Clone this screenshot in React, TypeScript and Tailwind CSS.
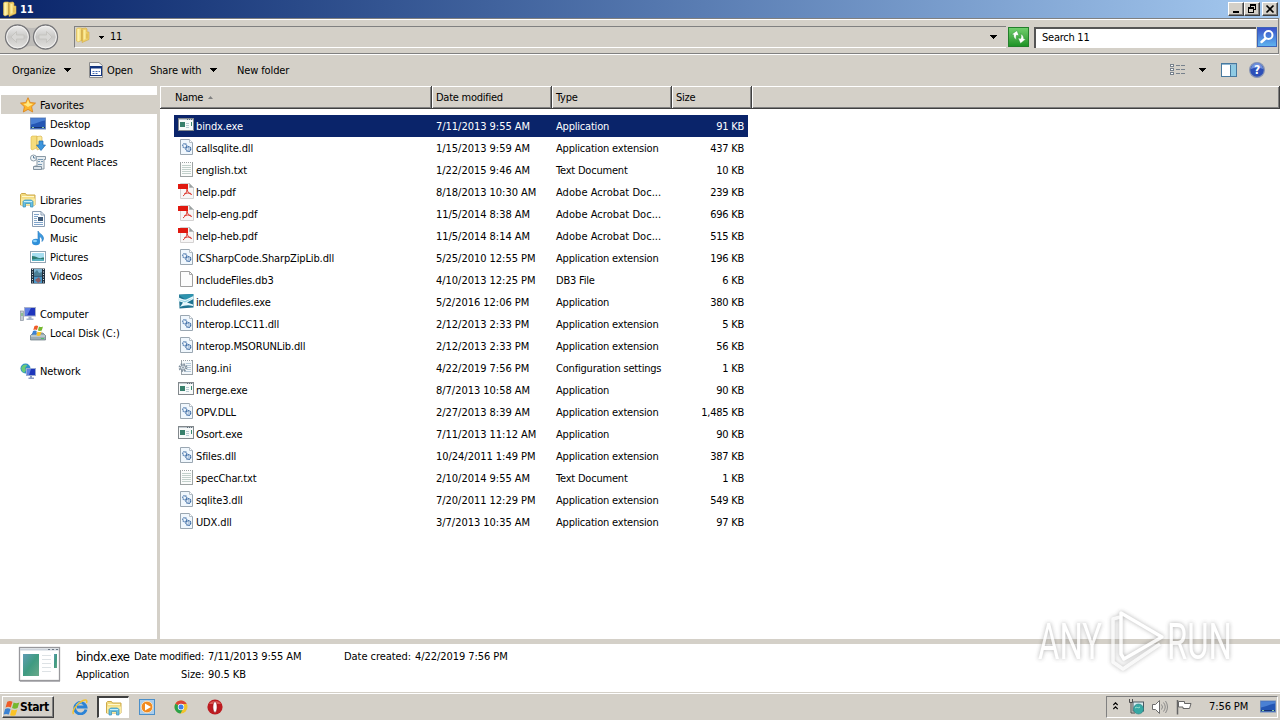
import type { ReactNode } from 'react'

type IconKind = 'exe' | 'dll' | 'txt' | 'pdf' | 'blank' | 'setup' | 'ini'

interface FileRow {
  name: string
  date: string
  type: string
  size: string
  icon: IconKind
}

const FILES: FileRow[] = [
  { name: 'bindx.exe', date: '7/11/2013 9:55 AM', type: 'Application', size: '91 KB', icon: 'exe' },
  { name: 'callsqlite.dll', date: '1/15/2013 9:59 AM', type: 'Application extension', size: '437 KB', icon: 'dll' },
  { name: 'english.txt', date: '1/22/2015 9:46 AM', type: 'Text Document', size: '10 KB', icon: 'txt' },
  { name: 'help.pdf', date: '8/18/2013 10:30 AM', type: 'Adobe Acrobat Doc...', size: '239 KB', icon: 'pdf' },
  { name: 'help-eng.pdf', date: '11/5/2014 8:38 AM', type: 'Adobe Acrobat Doc...', size: '696 KB', icon: 'pdf' },
  { name: 'help-heb.pdf', date: '11/5/2014 8:14 AM', type: 'Adobe Acrobat Doc...', size: '515 KB', icon: 'pdf' },
  { name: 'ICSharpCode.SharpZipLib.dll', date: '5/25/2010 12:55 PM', type: 'Application extension', size: '196 KB', icon: 'dll' },
  { name: 'IncludeFiles.db3', date: '4/10/2013 12:25 PM', type: 'DB3 File', size: '6 KB', icon: 'blank' },
  { name: 'includefiles.exe', date: '5/2/2016 12:06 PM', type: 'Application', size: '380 KB', icon: 'setup' },
  { name: 'Interop.LCC11.dll', date: '2/12/2013 2:33 PM', type: 'Application extension', size: '5 KB', icon: 'dll' },
  { name: 'Interop.MSORUNLib.dll', date: '2/12/2013 2:33 PM', type: 'Application extension', size: '56 KB', icon: 'dll' },
  { name: 'lang.ini', date: '4/22/2019 7:56 PM', type: 'Configuration settings', size: '1 KB', icon: 'ini' },
  { name: 'merge.exe', date: '8/7/2013 10:58 AM', type: 'Application', size: '90 KB', icon: 'exe' },
  { name: 'OPV.DLL', date: '2/27/2013 8:39 AM', type: 'Application extension', size: '1,485 KB', icon: 'dll' },
  { name: 'Osort.exe', date: '7/11/2013 11:12 AM', type: 'Application', size: '90 KB', icon: 'exe' },
  { name: 'Sfiles.dll', date: '10/24/2011 1:49 PM', type: 'Application extension', size: '387 KB', icon: 'dll' },
  { name: 'specChar.txt', date: '2/10/2014 9:55 AM', type: 'Text Document', size: '1 KB', icon: 'txt' },
  { name: 'sqlite3.dll', date: '7/20/2011 12:29 PM', type: 'Application extension', size: '549 KB', icon: 'dll' },
  { name: 'UDX.dll', date: '3/7/2013 10:35 AM', type: 'Application extension', size: '97 KB', icon: 'dll' },
]

function Svg({ children, className = 'h-4 w-4', box = '0 0 16 16' }: { children: ReactNode; className?: string; box?: string }) {
  return (
    <svg viewBox={box} className={`block shrink-0 ${className}`} fill="none">
      {children}
    </svg>
  )
}

function FileIcon({ kind }: { kind: IconKind }) {
  switch (kind) {
    case 'exe':
      return (
        <Svg>
          <rect x="0.5" y="1.5" width="15" height="12" fill="#f8fafa" stroke="#82888c" />
          <path d="M1 2.5h14" stroke="#c3ccd2" />
          <path d="M9 2.5h1M11 2.5h1M13 2.5h1" stroke="#5f6d78" />
          <rect x="2" y="5" width="5" height="5" fill="#38806c" />
          <path d="M8 6.5h3M8 8.5h3M8 10.5h3" stroke="#b7cbd2" />
          <path d="M13.5 5v4" stroke="#3c8a70" />
        </Svg>
      )
    case 'dll':
      return (
        <Svg>
          <path d="M2.5 .5h9l3 3v12h-12z" fill="#f0f7fd" stroke="#9aa7b2" />
          <path d="M11.5 .5v3h3" fill="#fff" stroke="#b5bec6" />
          <circle cx="6.7" cy="6.7" r="2" stroke="#5b84b5" strokeWidth="1.5" strokeDasharray="1.3 .5" />
          <circle cx="10.3" cy="10" r="2.3" stroke="#3f6da5" strokeWidth="1.5" strokeDasharray="1.4 .5" />
          <circle cx="10.3" cy="10" r=".8" fill="#8fb0d4" />
        </Svg>
      )
    case 'txt':
      return (
        <Svg>
          <rect x="2.5" y="1.5" width="12" height="14" fill="#fbfcfb" stroke="#9da3a3" />
          <path d="M3 1.5h11" stroke="#fff" strokeDasharray="1 1" />
          <path d="M4 4.5h9M4 6.5h9M4 8.5h9M4 10.5h9M4 12.5h9" stroke="#c2d0cb" />
        </Svg>
      )
    case 'pdf':
      return (
        <Svg>
          <path d="M2.5 .5h9l4 4v11h-13z" fill="#f7f6f6" stroke="#d4d2d2" />
          <path d="M11.5 .5v4h4z" fill="#9aa0a0" stroke="#b9bdbd" />
          <rect x="0" y="1" width="10" height="5" fill="#e0190f" />
          <path d="M9 6c.3 3-2 5.5-4 7M9 6c.5 3 2 5 5 5.500M6 11c2-1 5-1.300 7-.5" stroke="#dd3a30" />
        </Svg>
      )
    case 'blank':
      return (
        <Svg>
          <path d="M2.5 .5h9l3 3v12h-12z" fill="#fcfcfc" stroke="#a0a0a0" />
          <path d="M11.5 .5v3h3" stroke="#a9a9a9" />
        </Svg>
      )
    case 'setup':
      return (
        <Svg>
          <path d="M1 1.500l14.500-.5v13.500l-14 1z" fill="#1f7391" />
          <path d="M1 2l14-1v3L8 7z" fill="#2d93ae" />
          <path d="M0 4.500c3 .5 5 2.500 8 2l7.500-3.500v3L9 9.500l6 2v1.500C10 11.500 6 12.500 2 14l3-4.500-5-1.500z" fill="#e6f7fc" />
          <path d="M0 6.500l7 1.500 8-3-6 3.500-2 1z" fill="#93d3e2" />
        </Svg>
      )
    case 'ini':
      return (
        <Svg>
          <rect x="3.5" y="1.5" width="11" height="14" fill="#f4f8fb" stroke="#9aa2a8" />
          <path d="M4 1.5h10" stroke="#fff" strokeDasharray="1 1" />
          <path d="M8 4.5h5M9 6.5h4M9 8.5h4M9 10.5h4M7 12.5h6" stroke="#b5c8d8" />
          <circle cx="5" cy="8.5" r="3.4" stroke="#7e8e9c" strokeWidth="2" strokeDasharray="1.6 1.07" />
          <circle cx="5" cy="8.5" r="2.5" fill="#dfe7ee" stroke="#8594a2" />
          <circle cx="5" cy="8.5" r="1" fill="#8d9ba8" />
        </Svg>
      )
  }
}

function Folder({ className = 'h-4 w-4' }: { className?: string }) {
  return (
    <Svg className={className}>
      <path d="M1.500 2l1-1h4v12.500L3 15l-1.500-1z" fill="#f5dc7c" stroke="#dcb84c" strokeWidth=".6" />
      <path d="M2.500 2h2v12l-2 .5z" fill="#fdf1ad" />
      <path d="M7 1.500l4-.5 1 1v3h2v7.500l-7 3z" fill="#efd06a" stroke="#d3aa40" strokeWidth=".6" />
      <path d="M8.500 3h2v9l-2 1z" fill="#fbeb9c" />
      <path d="M12 6.500v5M7 3v11" stroke="#c9a03b" strokeWidth=".7" />
    </Svg>
  )
}

function Libraries({ className = 'h-4 w-4' }: { className?: string }) {
  return (
    <Svg className={className}>
      <path d="M.5 13V2.500l1-1h4l1 1.500h8.500v10z" fill="#f3dc82" stroke="#cda94a" />
      <path d="M2 4.500h12" stroke="#fff8cf" />
      <path d="M1 6.500h14V13H1z" fill="#faeb9f" />
      <path d="M3 15V9.500l1.500-1.500h7L13 9.500V15h-2.500v-3.500h-5V15z" fill="#68bfe2" stroke="#388fb8" strokeWidth=".7" />
      <path d="M4 9.500h8" stroke="#c9effb" />
    </Svg>
  )
}

function Monitor({ className = 'h-4 w-4' }: { className?: string }) {
  return (
    <Svg className={className}>
      <rect x=".5" y="2" width="15" height="11" fill="#2456b4" stroke="#6d8bbb" />
      <path d="M1 2.500h14v2C10 5 6 8 1 8.500z" fill="#4a80d4" />
      <path d="M1 11.500h14" stroke="#16306f" />
      <path d="M2 11.500h2M12 11.500h2" stroke="#8ed0a0" />
    </Svg>
  )
}

// Four-colour waving flag, drawn in the top of a 16px box
function Flag() {
  return (
    <>
      <path d="M4.500 1c1.500-1 2.500-.6 3.700 0L7 5c-1.300-.7-2.500-.7-3.700 0z" fill="#ef5c28" />
      <path d="M9 1.400c1.200.7 2.500.8 4 0l-1.200 4c-1.400.7-2.600.6-3.900 0z" fill="#75b82f" />
      <path d="M3 6c1.500-.8 2.500-.6 3.800 0l-1.200 4c-1.300-.7-2.500-.6-3.700 0z" fill="#3b82d2" />
      <path d="M7.600 6.400c1.300.7 2.500.7 4 0l-1.300 4c-1.400.7-2.600.6-3.800 0z" fill="#fbc324" />
    </>
  )
}

const NAV_ICONS: Record<string, ReactNode> = {
  Favorites: (
    <Svg>
      <path d="M8 .7l2.200 4.800 5.300.6-3.900 3.600 1.100 5.300L8 12.400 3.300 15l1.100-5.300L.5 6.100l5.300-.6z" fill="#fdb52c" stroke="#d98018" strokeWidth=".8" />
      <path d="M8 2.500l1.500 4 3.500.5L8 10l-4.500-3 3-.5z" fill="#ffe884" />
    </Svg>
  ),
  Desktop: <Monitor />,
  Downloads: (
    <Svg>
      <path d="M1 2l1-1h5v12l-5 2-1-1z" fill="#f5dc7c" stroke="#dcb84c" strokeWidth=".6" />
      <path d="M7 1.500l4-.5 1 1v11l-5 2z" fill="#fbeb9c" stroke="#d3aa40" strokeWidth=".6" />
      <path d="M9 6h4v4h2.500L11 15.500 6.500 10H9z" fill="#3c95dd" stroke="#1c68ad" strokeWidth=".7" />
    </Svg>
  ),
  'Recent Places': (
    <Svg>
      <path d="M5 2.500h10.500v3H14v9.500H4.500V12H7V6z" fill="#e6ecf0" stroke="#8a99a5" />
      <path d="M3.500 12.500h8v3h-8z" fill="#dce4ea" stroke="#82929f" />
      <path d="M8 5.500h5M8 7.500h2M11 7.500h2M8 10.500h4" stroke="#789ab5" />
      <circle cx="3.500" cy="4" r="3" fill="#f3f7f9" stroke="#8c9da9" />
      <path d="M3.500 2v2H5.500" stroke="#5f7f9a" />
    </Svg>
  ),
  Libraries: <Libraries />,
  Documents: (
    <Svg>
      <path d="M2.500 .5h8.500l3.500 3.500v11.500h-12z" fill="#fafcfe" stroke="#8a9db3" />
      <path d="M11 .5V4h3.500" stroke="#8a9db3" />
      <path d="M4 3.500h5M4 5.500h4M4 11.500h9M4 13.500h9" stroke="#7fa3ca" />
      <rect x="8" y="6" width="5" height="4" fill="#3e5875" />
      <path d="M4 7.500h3M4 9.500h3" stroke="#8cabc9" />
    </Svg>
  ),
  Music: (
    <Svg>
      <path d="M8 1c1 3 5 3 5.500 7 0 1.500-.5 2.500-1.500 3.500.5-3-1-4.500-2.500-5V12H8z" fill="#3e9be0" stroke="#2377bd" strokeWidth=".6" />
      <ellipse cx="6" cy="12" rx="4" ry="3.200" fill="#2e8fd9" />
      <ellipse cx="5" cy="11" rx="2" ry="1.200" fill="#8bd2fa" />
    </Svg>
  ),
  Pictures: (
    <Svg>
      <rect x=".5" y="2.500" width="15" height="11" fill="#fff" stroke="#93a6b5" />
      <rect x="2" y="4" width="12" height="8" fill="#a7def0" />
      <path d="M2 7c3 0 5 1.500 7 2s3-.5 5-.5V12H2z" fill="#2d7c71" />
      <path d="M2 10.500c5-1 8-1 12 0V12H2z" fill="#5ab2c2" />
    </Svg>
  ),
  Videos: (
    <Svg>
      <rect x="1" y=".5" width="14" height="15" fill="#20303f" />
      <rect x="4" y="1" width="8" height="6.500" fill="#7fb4d2" />
      <rect x="4" y="8.500" width="8" height="6.500" fill="#4a98c9" />
      <path d="M4 5l3-3 2 3 3-1v3.500H4z" fill="#4b7f96" />
      <path d="M5 12l4-3 2 4-3 2z" fill="#8d5f66" />
      <path d="M2.500 1v14M13.500 1v14" stroke="#dce6ec" strokeDasharray="1 1.500" />
    </Svg>
  ),
  Computer: (
    <Svg>
      <rect x="0.500" y="5" width="3" height="9.500" fill="#c3cbd3" stroke="#8b959f" strokeWidth=".7" />
      <path d="M2 7v3" stroke="#56b454" />
      <rect x="4.500" y="1.500" width="11" height="8.500" fill="#1e35bd" stroke="#a8b1ca" />
      <path d="M5 2h6l-4 7.500H5z" fill="#5d7ce4" />
      <path d="M8.500 10.500h3v2h2v1.500h-7v-1.500h2z" fill="#a5b3cb" />
    </Svg>
  ),
  'Local Disk (C:)': (
    <Svg>
      <path d="M3 8h10l2.500 2.500v4.500H.5v-4.500z" fill="#9cabb2" stroke="#66777f" strokeWidth=".7" />
      <path d="M1 11h14" stroke="#d5e3e8" />
      <path d="M11 13.500h3" stroke="#4ec26c" />
      <Flag />
    </Svg>
  ),
  Network: (
    <Svg>
      <circle cx="5.500" cy="5.500" r="5" fill="#2e8ecb" />
      <path d="M1.500 4c2-3 4-3 6-2L5 5l1 2-2 3C2 8.500.8 7 1.500 4z" fill="#6bcb76" />
      <rect x="6.500" y="5.500" width="9" height="7" fill="#1d36bb" stroke="#9aa9d0" />
      <path d="M7 6h4l-2 6H7z" fill="#5f80e2" />
      <path d="M10 13h2v1.500h2V16H8.500v-1.500H10z" fill="#8b9cc4" />
    </Svg>
  ),
}

const NAV_GROUPS = [
  { root: 'Favorites', items: ['Desktop', 'Downloads', 'Recent Places'] },
  { root: 'Libraries', items: ['Documents', 'Music', 'Pictures', 'Videos'] },
  { root: 'Computer', items: ['Local Disk (C:)'] },
  { root: 'Network', items: [] },
]

function Caret({ className = '' }: { className?: string }) {
  return (
    <svg viewBox="0 0 7 4" className={`h-1 w-[7px] shrink-0 ${className}`} shapeRendering="crispEdges">
      <path d="M0 0h7v1H6v1H5v1H4v1H3V3H2V2H1V1H0z" fill="#000" />
    </svg>
  )
}

function CaptionButton({ children, className = '' }: { children: ReactNode; className?: string }) {
  return (
    <button
      type="button"
      className={`flex h-[14px] w-4 items-center justify-center border border-t-white border-r-[#404040] border-b-[#404040] border-l-white bg-[#d4d0c8] shadow-[inset_-1px_-1px_0_#808080] ${className}`}
    >
      {children}
    </button>
  )
}

function TitleBar() {
  return (
    <header className="flex h-[18px] items-center bg-linear-to-r from-[#0a246a] to-[#a6caf0] pr-[2px] pl-[2px]">
      <Folder />
      <span className="ml-[2px] pt-[2px] text-[11px] font-bold text-white">11</span>
      <CaptionButton className="ml-auto">
        <svg viewBox="0 0 12 10" className="h-[10px] w-3" shapeRendering="crispEdges">
          <path d="M3 7h6v2H3z" fill="#000" />
        </svg>
      </CaptionButton>
      <CaptionButton>
        <svg viewBox="0 0 12 10" className="h-[10px] w-3" fill="none" stroke="#000" shapeRendering="crispEdges">
          <path d="M4.500 3V.5h5v5H8M4 1.500h6M2.500 3.500h5v5h-5zM2 4.500h6" />
        </svg>
      </CaptionButton>
      <CaptionButton className="ml-[2px]">
        <svg viewBox="0 0 12 10" className="h-[10px] w-3">
          <path d="M2.500 1.500l7 7M9.500 1.500l-7 7" stroke="#000" strokeWidth="1.700" />
        </svg>
      </CaptionButton>
    </header>
  )
}

function NavArrows() {
  return (
    <svg viewBox="0 0 56 28" className="h-7 w-14 shrink-0" fill="none">
      <defs>
        <linearGradient id="orb" x1="0" y1="0" x2="0" y2="1">
          <stop offset="0" stopColor="#efefee" />
          <stop offset=".5" stopColor="#c8c7c5" />
          <stop offset="1" stopColor="#e4e3e1" />
        </linearGradient>
      </defs>
      <path d="M14 2.500h28v23H14z" fill="#bebcb9" />
      <path d="M16 2c7 4 17 4 24 0zM16 26c7-4 17-4 24 0z" fill="#d4d0c8" />
      <circle cx="13.500" cy="14" r="12" fill="url(#orb)" stroke="#77777a" strokeWidth="1.300" />
      <circle cx="41.500" cy="14" r="12" fill="url(#orb)" stroke="#77777a" strokeWidth="1.300" />
      <circle cx="13.500" cy="14" r="10.800" stroke="#f4f3f2" />
      <circle cx="41.500" cy="14" r="10.800" stroke="#f4f3f2" />
      <path d="M7 14l5.500-5.500v3.500H20v4h-7.500v3.500zM48 14l-5.500-5.500v3.500H35v4h7.500v3.500z" fill="#d8d7d5" stroke="#c0beba" strokeWidth=".7" />
    </svg>
  )
}

function AddressBar() {
  return (
    <div className="mr-[1px] flex h-9 items-center border-y border-t-[#808080] border-r border-r-[#808080] border-b-[#808080] pt-[2px] pl-1 shadow-[inset_0_1px_0_#fff,0_1px_0_#fff]">
      <NavArrows />
      <div className="ml-[14px] flex h-[22px] w-[932px] items-center border-t border-b border-l border-t-[#808080] border-b-white border-l-[#808080]">
        <Folder className="mb-1 h-4 w-4" />
        <svg viewBox="0 0 5 3" className="ml-[8px] h-[3px] w-[5px]" shapeRendering="crispEdges">
          <path d="M0 0h5v1H4v1H3v1H2V2H1V1H0z" fill="#000" />
        </svg>
        <span className="ml-[6px]">11</span>
        <Caret className="mr-[9px] ml-auto" />
      </div>
      <button type="button" className="ml-[2px] flex h-5 w-[21px] items-center justify-center border border-[#237f2b] bg-linear-to-b from-[#6fce6c] to-[#1b9425]">
        <svg viewBox="0 0 17 16" className="h-4 w-[17px]">
          <path d="M7 1.500L1.500 5.500l2 .3c0 2 .5 3.500 3 5.200C6 9 6 7.500 6.500 6.300l2.500.4zM10.500 14.500L16 10l-2.200-.2c0-2.300-.8-3.800-3.300-5.300.7 2 .8 3.500.2 4.900L8 9z" fill="#fff" stroke="#2a9633" strokeWidth=".5" />
        </svg>
      </button>
      <div className="ml-[5px] flex h-[21px] w-[222px] items-center border-t-2 border-l-2 border-t-[#555] border-l-[#555] bg-white pl-[6px]">
        <span>Search 11</span>
      </div>
      <button type="button" className="ml-px flex h-5 w-5 items-center justify-center border border-[#3d63b8] bg-linear-to-b from-[#3c50c8] to-[#5fb2ee]">
        <svg viewBox="0 0 18 18" className="h-[18px] w-[18px]" fill="none">
          <circle cx="10.500" cy="7" r="4" stroke="#fff" strokeWidth="2" />
          <path d="M7.500 10.500L3.500 14" stroke="#fff" strokeWidth="2.500" strokeLinecap="round" />
        </svg>
      </button>
    </div>
  )
}

function CommandBar() {
  return (
    <div className="flex h-[31px] items-center pl-3 tracking-[-0.12px] [&_span]:pt-[2px]">
      <span className="w-[52px]">Organize</span>
      <Caret />
      <Svg className="ml-[17px] h-4 w-4">
        <path d="M1.500 .5h9.500l3.500 3v12H1.500z" fill="#f5f6f6" stroke="#8b8b8b" />
        <rect x="2.500" y="4.500" width="11" height="9" fill="#fff" stroke="#13347e" />
        <path d="M2 5.500h12" stroke="#13347e" strokeWidth="2" />
        <path d="M4.500 9.500h2M7.500 9.500h2M10.500 9.500h1.500M4.500 11.500h2M7.500 11.500h2" stroke="#476eb6" />
      </Svg>
      <span className="ml-[3px] w-[43px]">Open</span>
      <span className="w-[60px]">Share with</span>
      <Caret />
      <span className="ml-[20px]">New folder</span>
      <svg viewBox="0 0 16 14" className="ml-auto h-[14px] w-4" fill="none" shapeRendering="crispEdges">
        <path d="M.5 1.500h3v2h-3zM.5 5.500h3v2h-3zM.5 9.500h3v2h-3z" fill="#fff" stroke="#77818c" />
        <path d="M6 2.500h4M11 2.500h4M6 6.500h4M11 6.500h4M6 10.500h4M11 10.500h4" stroke="#77818c" />
      </svg>
      <Caret className="ml-[13px]" />
      <svg viewBox="0 0 16 14" className="ml-[15px] h-[14px] w-4" fill="none" shapeRendering="crispEdges">
        <rect x=".5" y=".5" width="15" height="13" fill="#fff" stroke="#47799f" />
        <path d="M1 1.500h14" stroke="#8fb7d2" />
        <rect x="10" y="2" width="5" height="11" fill="#8fcbe4" />
        <path d="M9.500 2v11" stroke="#47799f" />
      </svg>
      <svg viewBox="0 0 16 16" className="mr-[15px] ml-3 h-4 w-4">
        <circle cx="8" cy="8" r="7.400" fill="#2c4fb8" stroke="#8a97b5" strokeWidth="1.200" />
        <path d="M2 7a6 6 0 0 1 12 0c-4-2-8-2-12 0z" fill="#6f90dc" />
        <text x="8" y="12.200" textAnchor="middle" fontSize="12" fontWeight="bold" fill="#fff">?</text>
      </svg>
    </div>
  )
}

function NavItem({ name, root = false }: { name: string; root?: boolean }) {
  return (
    <div className={`flex h-[19px] items-center gap-1 ${root ? 'pl-[19px]' : 'pl-[29px]'} ${name === 'Favorites' ? 'bg-[#d4d0c8]' : ''}`}>
      {NAV_ICONS[name]}
      <span className="pt-[2px]">{name}</span>
    </div>
  )
}

function Sidebar() {
  return (
    <nav className="flex w-[160px] flex-col gap-[19px] border-r-[3px] border-[#d4d0c8] bg-white pt-[9px] pl-px tracking-[-0.1px]">
      {NAV_GROUPS.map((g) => (
        <div key={g.root}>
          <NavItem name={g.root} root />
          {g.items.map((i) => (
            <NavItem key={i} name={i} />
          ))}
        </div>
      ))}
    </nav>
  )
}

function HeaderCell({ className, children }: { className: string; children?: ReactNode }) {
  return (
    <div className={`flex items-center border-r border-r-[#404040] border-b border-b-[#404040] bg-[#d4d0c8] pt-[2px] shadow-[inset_1px_1px_0_#fff,inset_-1px_-1px_0_#808080] ${className}`}>
      {children}
    </div>
  )
}

function FileList() {
  return (
    <main className="flex-1 bg-white">
      <div className="flex h-[23px]">
        <HeaderCell className="w-[272px] pl-[15px]">
          Name
          <svg viewBox="0 0 5 3" className="mb-[2px] ml-[5px] h-[3px] w-[5px]">
            <path d="M2.500 0L5 3H0z" fill="#808080" />
          </svg>
        </HeaderCell>
        <HeaderCell className="w-[120px] pl-1">Date modified</HeaderCell>
        <HeaderCell className="w-[120px] pl-1">Type</HeaderCell>
        <HeaderCell className="w-[80px] pl-1">Size</HeaderCell>
        <HeaderCell className="flex-1" />
      </div>
      <div className="mt-[6px] ml-[14px] w-[574px] [&_span]:pt-[2px] [&_svg]:mb-[2px]">
        {FILES.map((f, i) => (
          <div key={f.name} className={`flex h-[22px] items-center pr-1 pl-1 ${i === 0 ? 'bg-[#0a246a] text-white' : ''}`}>
            <FileIcon kind={f.icon} />
            <span className="ml-[2px] w-[240px] tracking-[-0.13px]">{f.name}</span>
            <span className="w-[120px] tracking-[-0.03px]">{f.date}</span>
            <span className={`w-[120px] ${f.icon === 'pdf' ? 'tracking-[0.05px]' : 'tracking-[-0.2px]'}`}>{f.type}</span>
            <span className="ml-auto">{f.size}</span>
          </div>
        ))}
      </div>
    </main>
  )
}

function DetailsPane() {
  return (
    <section className="flex h-12 bg-white pt-[2px] pl-[18px] tracking-[-0.06px]">
      <svg viewBox="0 0 44 37" className="h-[37px] w-11 shrink-0" fill="none">
        <defs>
          <linearGradient id="thumb" x1="0" y1="0" x2="1" y2="1">
            <stop offset="0" stopColor="#5f9cb4" />
            <stop offset=".5" stopColor="#3f9b81" />
            <stop offset="1" stopColor="#6aa98a" />
          </linearGradient>
        </defs>
        <rect x="1.500" y="1.500" width="40" height="33" fill="#fff" stroke="#98989c" strokeWidth="1.300" />
        <path d="M2 35.500h40" stroke="#b4b4b8" />
        <path d="M2 3.500h39" stroke="#ccd3dc" strokeWidth="2" />
        <path d="M30 3.500h2M34 3.500h2M38 3.500h2" stroke="#6c7784" />
        <rect x="5" y="8" width="16" height="22" fill="url(#thumb)" />
        <path d="M24 9.500h9M24 13.500h9M24 17.500h9M24 21.500h9M24 25.500h9" stroke="#dde2e5" />
        <rect x="36" y="8" width="3" height="14" fill="url(#thumb)" />
      </svg>
      <div className="ml-[14px] flex flex-col pt-[2px]">
        <div className="flex h-[18px] items-center">
          <span className="w-[58px] text-[13px] tracking-[-0.35px]">bindx.exe</span>
          <span className="w-[74px] tracking-[-0.25px]">Date modified:</span>
          <span className="w-[136px]">7/11/2013 9:55 AM</span>
          <span className="w-[71px]">Date created:</span>
          <span>4/22/2019 7:56 PM</span>
        </div>
        <div className="flex h-[18px] items-center">
          <span className="w-[105px] tracking-[-0.2px]">Application</span>
          <span className="w-[27px]">Size:</span>
          <span>90.5 KB</span>
        </div>
      </div>
    </section>
  )
}

function Taskbar() {
  return (
    <footer className="flex h-7 items-center border-t border-[#d4d0c8] bg-[#d4d0c8] pt-px pl-[2px] shadow-[inset_0_1px_0_#fff]">
      <button type="button" className="flex h-[22px] w-[52px] items-center border border-t-white border-r-[#404040] border-b-[#404040] border-l-white text-[12px] font-bold shadow-[inset_-1px_-1px_0_#808080]">
        <Svg className="h-[17px] w-[17px]" box="1.500 -1 12 12">
          <Flag />
        </Svg>
        <span className="tracking-[-0.4px]">Start</span>
      </button>
      <Svg className="ml-[18px] h-4 w-4">
        <path d="M14 10.500A5.700 5.700 0 1 1 14 8H5" stroke="#2b83d6" strokeWidth="2.800" />
        <path d="M4 6a5 5 0 0 1 6-2" stroke="#7cc6f5" />
        <path d="M1.500 15C-.5 12 5 4 11 1.500c3-1.300 4.500-.5 3.500 2.500" stroke="#f2c230" strokeWidth="1.500" />
      </Svg>
      <div className="ml-[9px] flex h-[22px] w-8 items-center justify-center border-t-2 border-r border-b border-l-2 border-t-[#404040] border-r-white border-b-white border-l-[#404040] bg-white">
        <Libraries />
      </div>
      <Svg className="ml-[10px] h-4 w-4">
        <rect x=".5" y=".5" width="15" height="15" fill="#aacdec" stroke="#4b8fc9" />
        <circle cx="8" cy="8" r="5.800" fill="#f18a20" stroke="#f9dcb5" />
        <path d="M6 4.500v7L12 8z" fill="#fff" />
      </Svg>
      <Svg className="ml-[18px] h-4 w-4">
        <circle cx="8" cy="8" r="6.500" fill="#f2c32c" />
        <path d="M8 8L2.400 4.700A6.500 6.500 0 0 1 13.700 5H8z" fill="#dd4437" />
        <path d="M8 8L2.400 4.700A6.500 6.500 0 0 0 7.500 14.500L10.500 9z" fill="#2ba14b" />
        <circle cx="8" cy="8" r="3.200" fill="#fff" />
        <circle cx="8" cy="8" r="2.500" fill="#3f7fe8" />
      </Svg>
      <Svg className="ml-[18px] h-4 w-4">
        <ellipse cx="8" cy="8" rx="7.600" ry="7.500" fill="#bd1b20" />
        <path d="M2 5c2-4 10-4 12 0z" fill="#dc5a56" />
        <ellipse cx="8" cy="8" rx="2.100" ry="5.500" fill="#fff" stroke="#8b0d13" strokeWidth=".6" />
      </Svg>
      <div className="mr-[2px] ml-auto flex h-[22px] w-[172px] items-center border border-t-[#808080] border-r-white border-b-white border-l-[#808080] pl-[6px]">
        <svg viewBox="0 0 5 8" className="mb-[2px] h-2 w-[5px]" fill="none" stroke="#000" strokeWidth="1.200">
          <path d="M.3 3l2.200-2.200L4.700 3M.3 7l2.200-2.200L4.700 7" />
        </svg>
        <Svg className="ml-[10px] h-4 w-4">
          <rect x="5" y="3" width="10.500" height="9" fill="#d8eef2" stroke="#4d5860" />
          <circle cx="10.500" cy="10" r="5" fill="#37a9a4" stroke="#2a7d80" strokeWidth=".6" />
          <path d="M7 9c2-2 3 1 5-1" stroke="#a6e5d4" />
          <path d="M1.500 0v3.500h3V0M3 3.500V14h4" stroke="#4d4d4d" />
        </Svg>
        <Svg className="ml-2 h-4 w-4">
          <path d="M.5 5.500h3l4-4v13l-4-4h-3z" fill="#fff" stroke="#6c6c6c" />
          <path d="M9.500 5.500q2 2.500 0 5M11.500 3.500q3.500 4.500 0 9M13.500 2q4 6 0 12" stroke="#828282" strokeWidth=".9" />
        </Svg>
        <Svg className="ml-2 h-4 w-4">
          <path d="M1.500 1v14.500" stroke="#666" strokeWidth="1.500" />
          <path d="M2.500 2.500h6v2h6.500l-1.500 5H7v-1.500H2.500z" fill="#fff" stroke="#666" />
        </Svg>
        <span className="ml-[17px] w-[51px] tracking-[-0.1px]">7:56 PM</span>
        <Monitor />
      </div>
    </footer>
  )
}

// Semi-transparent logo laid over the lower right corner
function Watermark() {
  return (
    <svg viewBox="0 0 220 76" className="pointer-events-none absolute top-[602px] left-[1030px] h-[76px] w-[220px] overflow-visible opacity-80 drop-shadow-[0_0_2px_rgba(90,90,90,0.6)]" fill="none">
      <g stroke="#fff" strokeWidth="3.500" strokeLinejoin="round">
        <path d="M90 15l-7 2v43l10 7 37-25" opacity=".85" />
        <path d="M91 52V11l41 24-38 22z" />
      </g>
      <g fontFamily="'Liberation Sans Narrow','Roboto',sans-serif" fontSize="50" letterSpacing="0" fill="#fff">
        <text x="8" y="57" textLength="64" lengthAdjust="spacingAndGlyphs">ANY</text>
        <text x="137" y="57" textLength="65" lengthAdjust="spacingAndGlyphs">RUN</text>
      </g>
    </svg>
  )
}

export default function App() {
  return (
    <div className="relative flex h-[720px] w-[1280px] flex-col overflow-hidden bg-[#d4d0c8] font-['DejaVu_Sans_Condensed','DejaVu_Sans',sans-serif] text-[11px] leading-[14px] tracking-[-0.25px] whitespace-nowrap text-black">
      <TitleBar />
      <AddressBar />
      <CommandBar />
      <div className="mt-px flex h-[553px]">
        <Sidebar />
        <FileList />
      </div>
      <div className="h-[5px]" />
      <DetailsPane />
      <Taskbar />
      <Watermark />
    </div>
  )
}
